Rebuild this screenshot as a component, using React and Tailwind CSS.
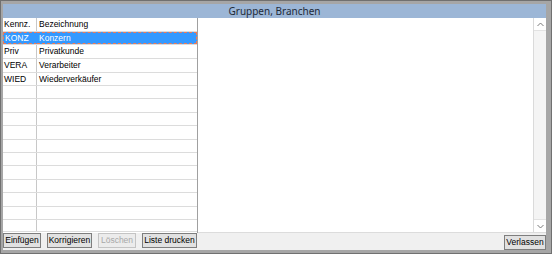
import React from 'react';

const rows = [
  { code: 'KONZ', name: 'Konzern', selected: true },
  { code: 'Priv', name: 'Privatkunde' },
  { code: 'VERA', name: 'Verarbeiter' },
  { code: 'WIED', name: 'Wiederverkäufer' },
];

// row heights, written out so the classes exist
const heights = [
  'h-[13px]', 'h-[14px]', 'h-[14px]', 'h-[13px]', 'h-[13px]',
  'h-[14px]', 'h-[13px]', 'h-[14px]', 'h-[13px]', 'h-[13px]',
  'h-[14px]', 'h-[13px]', 'h-[14px]', 'h-[13px]', 'h-[12px]',
];

const Chevron = ({ up }) => (
  <svg width="7" height="5" viewBox="0 0 7 5" className={up ? '' : 'rotate-180'}>
    <path d="M0.5 4 L3.5 1 L6.5 4" fill="none" stroke="#7a7a7a" strokeWidth="1" />
  </svg>
);

const Btn = ({ children, disabled, className = '' }) => (
  <div
    className={`h-[15px] flex items-center justify-center border ${
      disabled
        ? 'border-[#c4c4c4] bg-[#ececec] text-[#a8a8a8]'
        : 'border-[#7e7e7e] bg-[#e1e1e1] text-black'
    } ${className}`}
  >
    {children}
  </div>
);

const Row = ({ row, h }) => {
  const sel = row && row.selected;
  return (
    <div className={`${h} flex border-b border-[#dcdcdc] ${sel ? 'bg-[#3399ff] text-white' : 'text-black'}`}>
      <div className={`w-[34px] flex items-center pl-[1px] border-r ${sel ? 'border-[#3399ff] border-y border-l border-dashed border-y-[#f07a55] border-l-[#f07a55]' : 'border-[#c8c8c8]'}`}>
        {row ? row.code : ''}
      </div>
      <div className={`flex-1 flex items-center pl-[2px] ${sel ? 'border border-l-0 border-dashed border-[#f07a55]' : ''}`}>
        {row ? row.name : ''}
      </div>
    </div>
  );
};

export default function App() {
  return (
    <div
      className="w-[552px] h-[254px] flex flex-col bg-[#a6a6a6] border border-[#707070] pl-[2px] pt-[3px] pr-[5px] pb-[3px] text-[8.5px] leading-none"
      style={{ fontFamily: '"Liberation Sans", Arial, sans-serif' }}
    >
      <div
        className="h-[14px] flex items-center justify-center bg-[#9cb6d6] text-[#1e2a38] text-[10px]"
        style={{ fontFamily: '"Noto Sans", "Open Sans", sans-serif' }}
      >
        Gruppen, Branchen
      </div>

      <div className="h-[215px] flex bg-white">
        <div className="w-[195px] flex flex-col border-r border-[#a0a0a0]">
          <div className="h-[14px] flex border-b border-[#dcdcdc] text-black">
            <div className="w-[34px] flex items-center pl-[1px] border-r border-[#c8c8c8]">Kennz.</div>
            <div className="flex-1 flex items-center pl-[2px]">Bezeichnung</div>
          </div>
          {heights.map((h, i) => (
            <Row key={i} row={rows[i]} h={h} />
          ))}
        </div>
        <div className="flex-1 border-b border-[#dcdcdc]" />
        <div className="w-[13px] flex flex-col justify-between bg-[#f4f4f4] border-l border-[#dadada] border-b border-b-[#dcdcdc]">
          <div className="h-[13px] flex items-center justify-center bg-white border-b border-[#e2e2e2]">
            <Chevron up />
          </div>
          <div className="h-[13px] flex items-center justify-center bg-white border-t border-[#e2e2e2]">
            <Chevron />
          </div>
        </div>
      </div>

      <div className="h-[17px] flex items-start bg-[#f0f0f0]">
        <div className="flex gap-[6px]">
          <Btn className="w-[38px]">Einfügen</Btn>
          <Btn className="w-[45px]">Korrigieren</Btn>
          <Btn disabled className="w-[38px]">Löschen</Btn>
          <Btn className="w-[55px]">Liste drucken</Btn>
        </div>
        <div className="flex-1" />
        <Btn className="w-[42px] mt-[2px]">Verlassen</Btn>
      </div>
    </div>
  );
}
